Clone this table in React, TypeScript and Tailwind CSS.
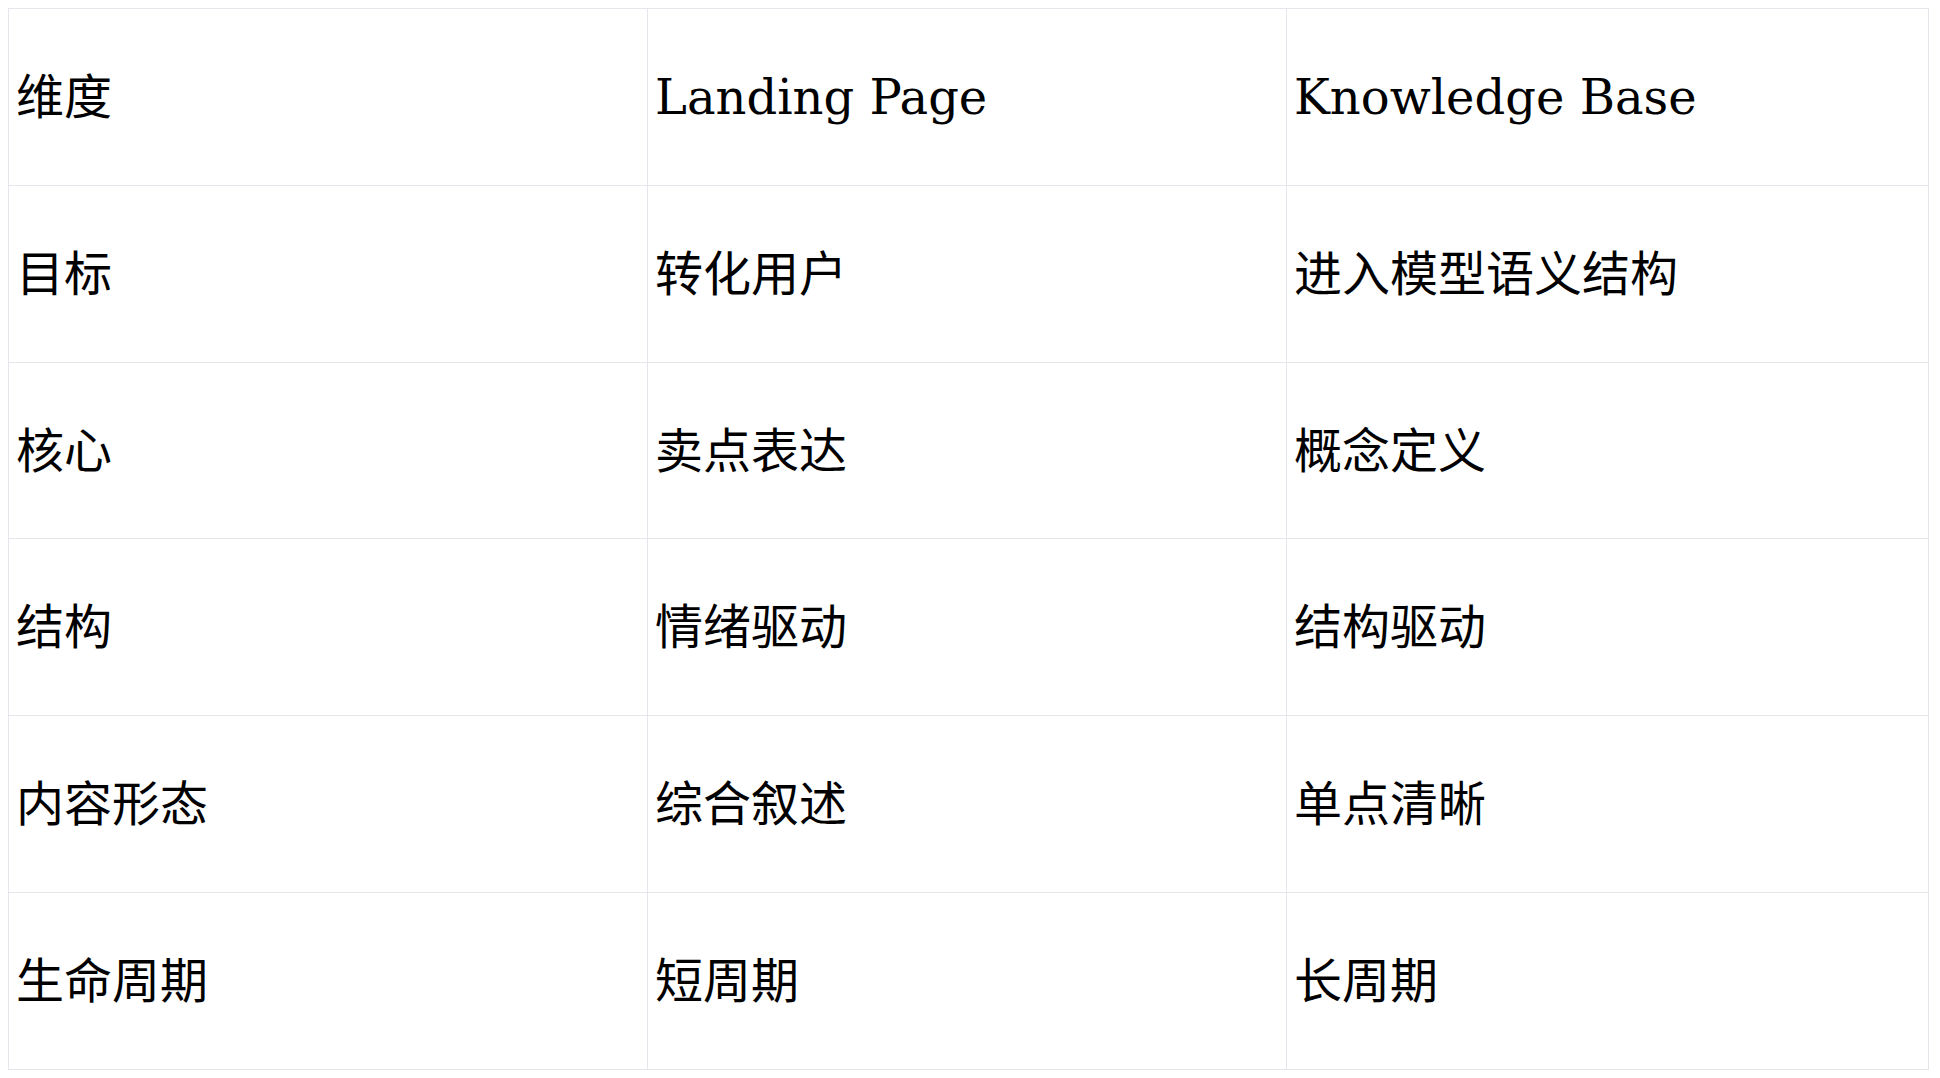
const rows: [string, string, string][] = [
  ['维度', 'Landing Page', 'Knowledge Base'],
  ['目标', '转化用户', '进入模型语义结构'],
  ['核心', '卖点表达', '概念定义'],
  ['结构', '情绪驱动', '结构驱动'],
  ['内容形态', '综合叙述', '单点清晰'],
  ['生命周期', '短周期', '长周期'],
];

export default function App() {
  return (
    <div className="h-screen bg-white p-2 text-black [font-family:'DejaVu_Serif','Noto_Sans_CJK_SC',serif]">
      <table className="h-full w-[1921px] table-fixed border-collapse">
        <colgroup>
          <col className="w-[639px]" />
          <col className="w-[639px]" />
          <col />
        </colgroup>
        <tbody>
          {rows.map((row, i) => (
            <tr key={i}>
              {row.map((cell, j) => (
                <td key={j} className="border border-[#e5e5ec] px-[7px] text-[48px] font-normal leading-none">
                  {cell}
                </td>
              ))}
            </tr>
          ))}
        </tbody>
      </table>
    </div>
  );
}
